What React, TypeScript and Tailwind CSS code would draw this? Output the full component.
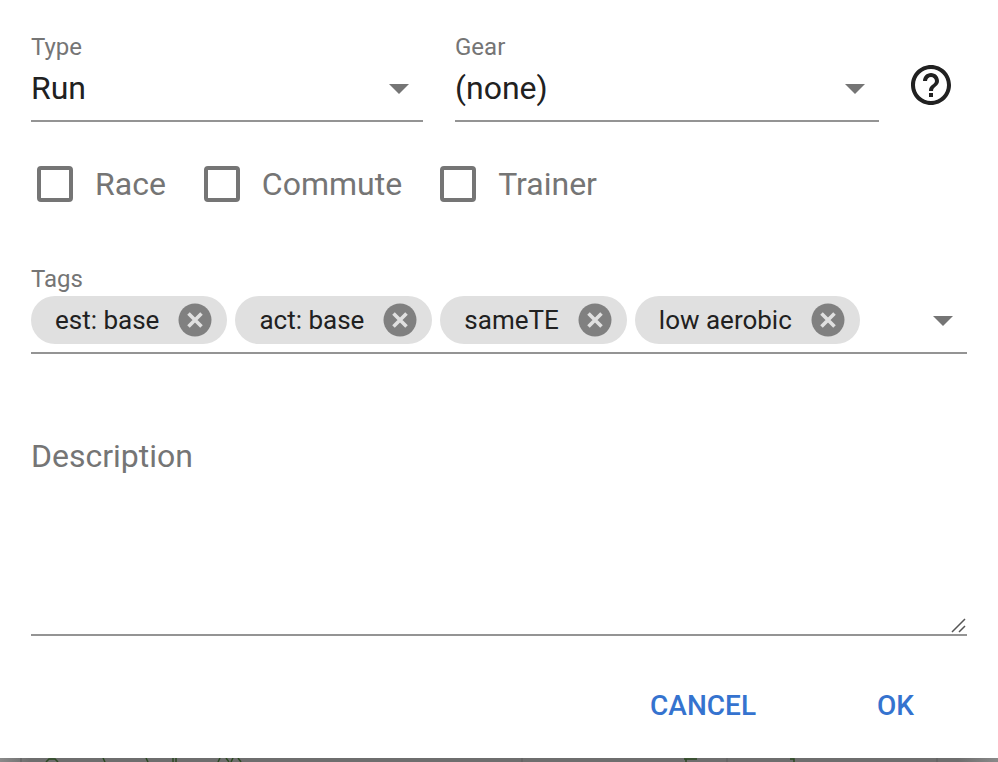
const font = { fontFamily: 'Roboto, sans-serif' };

const Arrow = ({ className = '' }: { className?: string }) => (
    <svg width="20" height="10" viewBox="0 0 20 10" className={`shrink-0 ${className}`}>
        <path d="M0 0h20L10 10z" fill="#757575" />
    </svg>
);

const SelectField = ({ label, value, className }: { label: string; value: string; className: string }) => (
    <div className={className}>
        <div className="text-[24px] leading-[24px] text-[#757575]">{label}</div>
        <div className="flex items-center justify-between h-[63px] border-b-2 border-[#949494] pr-[14px] pb-[4px]">
            <span className="text-[32px] leading-[40px] text-[#212121]">{value}</span>
            <Arrow className="mt-[3px]" />
        </div>
    </div>
);

const Check = ({ label }: { label: string }) => (
    <div className="flex items-center">
        <div className="w-[36px] h-[36px] border-[4px] border-[#757575] rounded-[4px]"></div>
        <span className="ml-[22px] text-[32px] leading-[40px] text-[#757575]">{label}</span>
    </div>
);

const Tag = ({ label }: { label: string }) => (
    <div className="flex items-center h-[48px] rounded-full bg-[#e0e0e0] pl-[24px] pr-[15px]">
        <span className="text-[26px] leading-[32px] text-[#212121]">{label}</span>
        <svg width="34" height="34" viewBox="0 0 34 34" className="ml-[19px]">
            <circle cx="17" cy="17" r="16.5" fill="#808080" />
            <path d="M10.5 10.5l13 13M23.5 10.5l-13 13" stroke="#e0e0e0" strokeWidth="3.6" />
        </svg>
    </div>
);

// the page behind the dialog, just a sliver of it shows at the bottom
const Backdrop = () => (
    <svg width="998" height="4" viewBox="0 0 998 4" className="block">
        <defs>
            <linearGradient id="fade" x1="0" x2="1" y1="0" y2="0">
                <stop offset="0" stopColor="#8a8a8a" />
                <stop offset="0.03" stopColor="#6e6e6e" />
                <stop offset="0.96" stopColor="#6e6e6e" />
                <stop offset="1" stopColor="#8a8a8a" />
            </linearGradient>
        </defs>
        <rect width="998" height="4" fill="url(#fade)" />
        <path d="M21 0v4M522 0v4M727 0v4M937 0v4" stroke="#5c5c5c" />
        <path d="M46 4l3-3h6l3 3M103 0l2 4M146 0l2 4M173 0v4M176 0v4M218 4l2-4M226 0l3 4M231 4l2-4M238 0l3 4M684 1h13M686 1v3M790 1h4v3" stroke="#2c4a22" strokeWidth="1.5" fill="none" />
    </svg>
);

export default function App() {
    return (
        <div style={font} className="w-[998px] h-[762px] overflow-hidden">
            <div className="h-[758px] bg-white pl-[31px] pr-[31px] pt-[35px] flex flex-col">
                <div className="flex items-start">
                    <SelectField label="Type" value="Run" className="w-[392px]" />
                    <SelectField label="Gear" value="(none)" className="w-[424px] ml-[32px]" />
                    <svg width="48" height="48" viewBox="0 0 24 24" className="ml-[28px] mt-[26px]" fill="#212121">
                        <path d="M11 18h2v-2h-2v2zm1-16C6.48 2 2 6.48 2 12s4.48 10 10 10 10-4.48 10-10S17.52 2 12 2zm0 18c-4.41 0-8-3.59-8-8s3.59-8 8-8 8 3.59 8 8-3.59 8-8 8zm0-14c-2.21 0-4 1.79-4 4h2c0-1.1.9-2 2-2s2 .9 2 2c0 2-3 1.75-3 5h2c0-2.25 3-2.5 3-5 0-2.21-1.79-4-4-4z" />
                    </svg>
                </div>
                <div className="flex items-center mt-[42px] ml-[6px] gap-[38px] h-[40px]">
                    <Check label="Race" />
                    <Check label="Commute" />
                    <Check label="Trainer" />
                </div>
                <div className="mt-[63px]">
                    <div className="text-[24px] leading-[24px] text-[#757575]">Tags</div>
                    <div className="flex items-start h-[63px] border-b-2 border-[#949494] pr-[14px] pt-[5px]">
                        <div className="flex gap-[8px] flex-1">
                            <Tag label="est: base" />
                            <Tag label="act: base" />
                            <Tag label="sameTE" />
                            <Tag label="low aerobic" />
                        </div>
                        <Arrow className="mt-[20px]" />
                    </div>
                </div>
                <div className="relative mt-[82px] h-[200px] border-b-2 border-[#949494]">
                    <div className="text-[32px] leading-[40px] text-[#757575]">Description</div>
                    <svg width="16" height="16" viewBox="0 0 16 16" className="absolute right-0 bottom-[1px]">
                        <path d="M1 15L14 2M8 15l6-6" stroke="#555" strokeWidth="1.5" />
                    </svg>
                </div>
                <div className="flex justify-end mt-[52px] pr-[53px]">
                    <span className="text-[28px] leading-[36px] font-medium text-[#3573cf]">CANCEL</span>
                    <span className="ml-[121px] text-[28px] leading-[36px] font-medium text-[#3573cf]">OK</span>
                </div>
            </div>
            <Backdrop />
        </div>
    );
}
